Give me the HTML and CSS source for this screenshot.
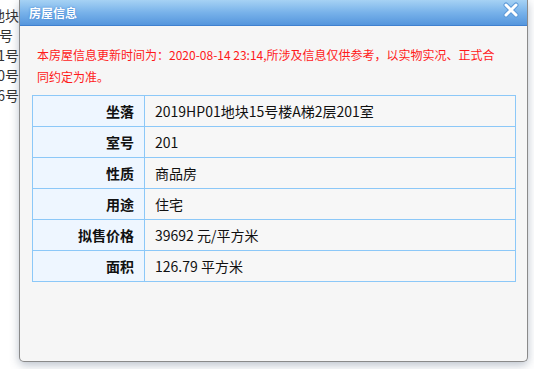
FILE: index.html
```html
<!DOCTYPE html>
<html lang="zh-CN">
<head>
    <meta charset="UTF-8">
    <meta name="viewport" content="width=device-width, initial-scale=1.0">
    <link rel="stylesheet" href="styles.css">
    <title>房屋信息</title>
</head>
<body>
    <div class="page">
        <div class="page-line">01地块</div>
        <div class="page-line short">号</div>
        <div class="page-line">1号</div>
        <div class="page-line">10号</div>
        <div class="page-line">16号</div>
    </div>

    <div class="dialog">
        <div class="dialog-head">
            <span class="dialog-title">房屋信息</span>
            <span class="dialog-close" title="关闭">
                <svg width="16" height="16" viewBox="0 0 16 16">
                    <path d="M3 3 L13 13 M13 3 L3 13" stroke="#5d9ad8" stroke-width="5" stroke-linecap="round"/>
                    <path d="M3 3 L13 13 M13 3 L3 13" stroke="#ffffff" stroke-width="3" stroke-linecap="round"/>
                </svg>
            </span>
        </div>
        <div class="dialog-body">
            <p class="notice">本房屋信息更新时间为：2020-08-14 23:14,所涉及信息仅供参考，以实物实况、正式合同约定为准。</p>
            <table class="info">
                <tr><th>坐落</th><td>2019HP01地块15号楼A梯2层201室</td></tr>
                <tr><th>室号</th><td>201</td></tr>
                <tr><th>性质</th><td>商品房</td></tr>
                <tr><th>用途</th><td>住宅</td></tr>
                <tr><th>拟售价格</th><td>39692 元/平方米</td></tr>
                <tr><th>面积</th><td>126.79 平方米</td></tr>
            </table>
        </div>
    </div>
</body>
</html>
```

FILE: styles.css
```css
body {
    margin: 0;
    padding: 0;
    background-color: #fff;
    font-family: "Microsoft YaHei", "Noto Sans CJK SC", sans-serif;
    height: 369px;
    overflow: hidden;
}

.page {
    width: 19px;
    padding-top: 5px;
    overflow: hidden;
}

.page-line {
    height: 20px;
    line-height: 20px;
    font-size: 14px;
    color: #333;
    white-space: nowrap;
    direction: rtl;
    text-align: right;
}

.page-line.short {
    padding-right: 6px;
}

.dialog {
    position: absolute;
    left: 19px;
    top: 0;
    width: 507px;
    height: 361px;
    background-color: #f6f6f6;
    border: 1px solid #8a8a8a;
    border-top: none;
    border-radius: 0 0 5px 5px;
    box-shadow: 0 3px 10px rgba(60, 80, 110, 0.35);
}

.dialog-head {
    height: 25px;
    display: flex;
    align-items: center;
    justify-content: space-between;
    padding: 0 8px 0 9px;
    background: linear-gradient(#a6d2f4, #78b2ea 50%, #5596dd);
    border-bottom: 1px solid #3f80cf;
}

.dialog-title {
    color: #fff;
    font-size: 12px;
    font-weight: bold;
    text-shadow: 0 0 2px #3d7fcf;
}

.dialog-close {
    display: flex;
    margin-top: -5px;
    cursor: pointer;
}

.dialog-body {
    padding: 0 10px 0 12px;
}

.notice {
    margin: 18px 0 7px;
    padding-left: 5px;
    width: 460px;
    font-size: 12px;
    line-height: 22px;
    color: #ff1a1a;
}

.info {
    width: 484px;
    border-collapse: collapse;
    font-size: 14px;
}

.info th,
.info td {
    height: 30px;
    padding: 0;
    border: 1px solid #8cc8f8;
}

.info th {
    width: 101px;
    padding-right: 10px;
    text-align: right;
    font-weight: bold;
    background-color: #eef6ff;
    color: #111;
}

.info td {
    padding-left: 10px;
    background-color: #f7f7f7;
    color: #111;
}
```
